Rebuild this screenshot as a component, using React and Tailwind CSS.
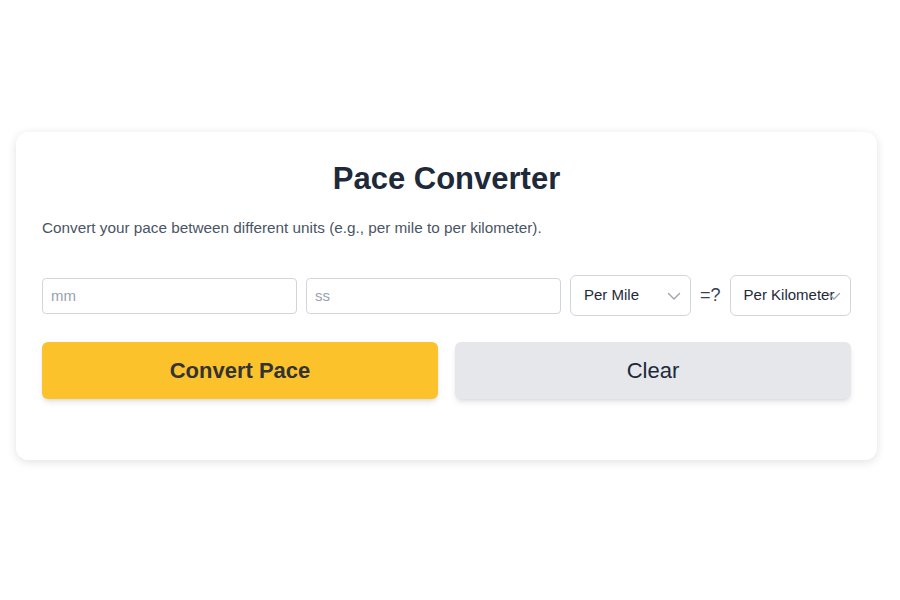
import React, { useState } from 'react';

const Chevron = () => (
  <svg className="pointer-events-none absolute right-[9px] top-1/2 -translate-y-1/2" width="16" height="16" viewBox="0 0 16 16" fill="none">
    <path d="M2.5 5.5 L8 11 L13.5 5.5" stroke="#9ca3af" strokeWidth="1.4" strokeLinecap="round" strokeLinejoin="round" />
  </svg>
);

const UnitSelect = ({ value, onChange, options }) => (
  <div className="relative w-[121px] shrink-0">
    <select
      value={value}
      onChange={(e) => onChange(e.target.value)}
      className="h-[41px] w-full appearance-none rounded-md border border-gray-300 bg-white pl-[13px] pr-2 text-[15px] text-gray-800 outline-none"
    >
      {options.map((o) => (
        <option key={o} value={o}>{o}</option>
      ))}
    </select>
    <Chevron />
  </div>
);

export default function App() {
  const [mm, setMm] = useState('');
  const [ss, setSs] = useState('');
  const [from, setFrom] = useState('Per Mile');
  const [to, setTo] = useState('Per Kilometer');

  const units = ['Per Mile', 'Per Kilometer'];

  const clear = () => {
    setMm('');
    setSs('');
  };

  return (
    <div className="min-h-screen bg-white pt-[132px]" style={{ fontFamily: '"Liberation Sans", Arial, sans-serif' }}>
      <div className="ml-4 w-[861px] rounded-xl bg-white px-[26px] pt-[29px] pb-[61px] shadow-[0_2px_10px_rgba(0,0,0,0.12)]">
        <h1 className="text-center text-[31px] font-bold leading-9 text-gray-800">Pace Converter</h1>
        <p className="mt-5 text-[15.3px] leading-[22px] text-gray-600">
          Convert your pace between different units (e.g., per mile to per kilometer).
        </p>

        <div className="mt-9 flex items-center gap-[9px]">
          <input
            value={mm}
            onChange={(e) => setMm(e.target.value)}
            placeholder="mm"
            className="h-9 w-[255px] rounded border border-gray-300 px-2 text-[15px] text-gray-800 outline-none placeholder:text-gray-400"
          />
          <input
            value={ss}
            onChange={(e) => setSs(e.target.value)}
            placeholder="ss"
            className="h-9 w-[255px] rounded border border-gray-300 px-2 text-[15px] text-gray-800 outline-none placeholder:text-gray-400"
          />
          <UnitSelect value={from} onChange={setFrom} options={units} />
          <span className="text-[18px] text-gray-700">=?</span>
          <UnitSelect value={to} onChange={setTo} options={units} />
        </div>

        <div className="mt-[26px] flex gap-[17px]">
          <button className="h-[57px] flex-1 rounded-md bg-[#fcc22b] text-[22px] font-bold text-[#333333] shadow-md">
            Convert Pace
          </button>
          <button onClick={clear} className="h-[57px] flex-1 rounded-md bg-gray-200 text-[22px] text-gray-800 shadow-md">
            Clear
          </button>
        </div>
      </div>
    </div>
  );
}
